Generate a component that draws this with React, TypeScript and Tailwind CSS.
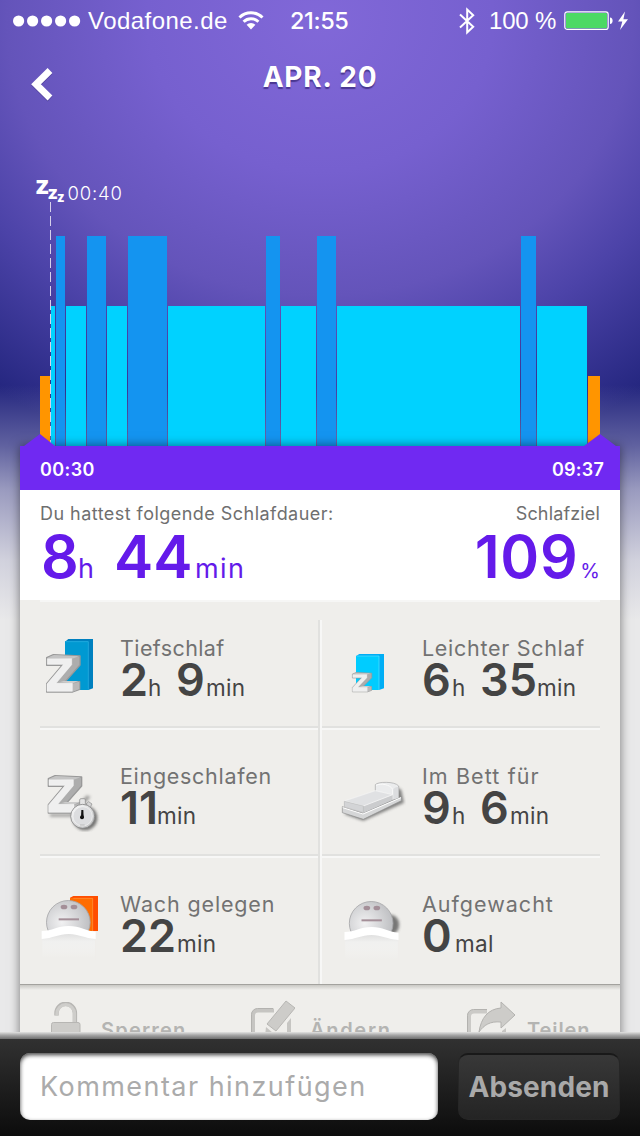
import type { ReactNode } from 'react';

const INTER = "font-['Inter','Noto_Sans',sans-serif]";

/* Sleep phases, left to right */
const PHASES = [
  { kind: 'awake', width: 10 },
  { kind: 'light', width: 4 },
  { kind: 'deep', width: 9 },
  { kind: 'light', width: 20 },
  { kind: 'deep', width: 19 },
  { kind: 'light', width: 20 },
  { kind: 'deep', width: 39 },
  { kind: 'light', width: 97 },
  { kind: 'deep', width: 14 },
  { kind: 'light', width: 35 },
  { kind: 'deep', width: 19 },
  { kind: 'light', width: 183 },
  { kind: 'deep', width: 15 },
  { kind: 'light', width: 50 },
  { kind: 'awake', width: 12 },
];

const PHASE_STYLES: Record<string, string> = {
  awake: 'h-[70px] bg-[#ff9500]',
  light: 'h-[140px] bg-[#00d2ff]',
  deep: 'h-[210px] bg-[#1494f0]',
};

const StatusBar = () => (
  <div className="flex h-[41px] shrink-0 items-center text-white">
    <svg className="ml-[13px]" width="68" height="12" viewBox="0 0 68 12" fill="#fff">
      {[0, 1, 2, 3, 4].map((i) => (
        <circle key={i} cx={5.6 + i * 14} cy="6" r="5.6" />
      ))}
    </svg>
    <span className="ml-[7px] w-[143px] whitespace-nowrap font-['Liberation_Sans',sans-serif] text-[24px] tracking-[0.45px]">
      Vodafone.de
    </span>
    <svg className="ml-[7px]" width="26" height="20" viewBox="0 0 26 20" fill="none" stroke="#fff">
      <path d="M1.5 6.5a16.5 16.5 0 0 1 23 0" strokeWidth="3" />
      <path d="M5.6 10.7a10.6 10.6 0 0 1 14.8 0" strokeWidth="3" />
      <path d="M8.6 13.8a6.2 6.2 0 0 1 8.8 0L13 18.5z" fill="#fff" stroke="none" />
    </svg>
    <span className="ml-[26px] w-[62px] whitespace-nowrap text-[23.5px] font-medium tracking-[-0.4px]">21:55</span>
    <svg className="ml-[107px]" width="16" height="28" viewBox="0 0 16 28" fill="none" stroke="#fff" strokeWidth="2">
      <path d="M1 7.5l13.2 12.2L8.2 25.5v-23l6 5.8L1 20.5" />
    </svg>
    <span className="ml-[14px] w-[75px] whitespace-nowrap font-['Liberation_Sans',sans-serif] text-[24px] tracking-[-0.2px]">
      100 %
    </span>
    <svg width="66" height="20" viewBox="0 0 66 20">
      <rect x="0.8" y="0.8" width="43.4" height="17.6" rx="2.5" fill="none" stroke="#fff" strokeWidth="1.2" />
      <rect x="2" y="2" width="41" height="15.2" rx="1" fill="#4cd964" />
      <path d="M46 6.5c3.5 0 3.5 6.5 0 6.5z" fill="#fff" />
      <path d="M61 .5L54 10.5h4.3L56 19l8-10.8h-4.6z" fill="#fff" />
    </svg>
  </div>
);

const Header = () => (
  <header className="relative flex h-[71px] shrink-0 justify-center">
    <button className="absolute left-[31px] top-[27px]" aria-label="Zurück">
      <svg width="24" height="36" viewBox="0 0 24 36" fill="none">
        <path d="M19 3.5L5 17.3 19 31" stroke="#30246b" strokeOpacity=".4" strokeWidth="6.8" />
        <path d="M19 2.5L5 16.3 19 30" stroke="#fff" strokeWidth="6.8" />
      </svg>
    </button>
    <h1 className="mt-[18px] whitespace-nowrap text-[28px] font-bold leading-[36px] tracking-[0.8px] text-white [text-shadow:0_2px_1px_rgba(40,25,100,.6)]">
      APR. 20
    </h1>
  </header>
);

const Chart = () => (
  <div className="relative h-[334px] shrink-0 px-10">
    {/* Falling asleep marker */}
    <div className="absolute left-[35px] top-[61px] flex items-start font-extrabold leading-none text-white">
      <span className="text-[25px]">z</span>
      <span className="-ml-0.5 mt-[11px] text-[18px]">z</span>
      <span className="-ml-px mt-[18px] text-[13px]">z</span>
      <span className="ml-[3px] mt-[11px] text-[18.5px] font-light tracking-[0.8px]">00:40</span>
    </div>
    <svg className="absolute left-[50px] top-[90px]" width="1" height="241" viewBox="0 0 1 241">
      <path d="M.5 0v241" stroke="#d5d0ea" strokeDasharray="10 4" />
    </svg>
    <div className="flex h-full items-end gap-px">
      {PHASES.map((phase, i) => (
        <div key={i} className={PHASE_STYLES[phase.kind]} style={{ width: phase.width }} />
      ))}
    </div>
  </div>
);

const TimeRange = () => (
  <div className="relative flex h-11 items-center justify-between bg-[#7029f2] pl-5 pr-4 pt-0.5 text-[18px] font-semibold tracking-[0.4px] text-white">
    <svg className="absolute -top-3 left-0" width="600" height="12" viewBox="0 0 600 12" fill="#7029f2">
      <path d="M4 12L20 0l15 12zM564 12L580 0l16 12z" />
    </svg>
    <span>00:30</span>
    <span className="tracking-[0.2px]">09:37</span>
  </div>
);

const Summary = () => (
  <div className="flex h-[110px] justify-between bg-white px-5 pt-[10px] text-[#6f6f6f]">
    <div>
      <p className="whitespace-nowrap text-[18px] leading-[28px] tracking-[0.46px]">Du hattest folgende Schlafdauer:</p>
      <p className="flex items-baseline whitespace-nowrap pl-px text-[#641aea]">
        <span className="w-[37px] text-[59px] font-semibold leading-[58px]">8</span>
        <span className="w-[36px] text-[27px] leading-none">h</span>
        <span className="w-[81px] text-[59px] font-semibold leading-[58px]">44</span>
        <span className="text-[27px] leading-none tracking-[1.4px]">min</span>
      </p>
    </div>
    <div className="flex flex-col items-end">
      <p className="text-[18px] leading-[28px] tracking-[0.15px]">Schlafziel</p>
      <p className="flex items-baseline text-[#641aea]">
        <span className="text-[59px] font-semibold leading-[58px] tracking-[0.7px]">109</span>
        <span className="ml-0.5 text-[20px] leading-none">%</span>
      </p>
    </div>
  </div>
);

/* Extruded letter in front of the phase boxes */
const BlockZ = ({ transform }: { transform?: string }) => (
  <g transform={transform} strokeLinejoin="round">
    <path d="M140 533l20-9 80 4v27l-44 50h43v23l-21 8h-78v-25l46-55h-46z" fill="#adadad" stroke="#999" strokeWidth="4" />
    <path d="M142 533l20-8 75 4-21 7z" fill="#c4c4c4" />
    <path d="M218 612l20-7v22l-20 8z" fill="#b9b9b9" />
    <path d="M178 607l12-4h46l-18 7z" fill="#cbcbcb" />
    <path d="M142 536h73v18l-47 56h49v24h-76v-22l50-59h-49z" fill="#efefef" stroke="#fbfbfb" strokeWidth="1.5" />
  </g>
);

const DeepSleepIcon = () => (
  <svg width="60" height="74" viewBox="120 450 180 222">
    <path d="M195 485l10-8h74v148l-14 5h-70z" fill="#0080bf" />
    <path d="M195 484h70v146h-70z" fill="#0099d2" />
    <path d="M197 485h68v144" fill="none" stroke="#2fb3e6" strokeWidth="2" />
    <BlockZ />
  </svg>
);

const LightSleepIcon = () => (
  <svg width="60" height="74" viewBox="60 450 180 222">
    <path d="M108 528l10-6h74v103l-15 5h-69z" fill="#00aef5" />
    <path d="M108 528h69v102h-69z" fill="#00ccff" />
    <path d="M110 528h67v102" fill="none" stroke="#5ce0ff" strokeWidth="2" />
    <BlockZ transform="translate(16 306) scale(.58 .518)" />
  </svg>
);

const FellAsleepIcon = () => (
  <svg width="60" height="74" viewBox="60 114 180 222">
    <defs>
      <filter id="watchShadow" x="-50%" y="-50%" width="200%" height="200%">
        <feGaussianBlur stdDeviation="5" />
      </filter>
      <linearGradient id="watch" x1="0" y1="0" x2="1" y2="1">
        <stop offset="0" stopColor="#fff" />
        <stop offset="1" stopColor="#b9babb" />
      </linearGradient>
    </defs>
    <path d="M90 281h60l50-55 12 4-50 60H90z" fill="#555" opacity=".5" filter="url(#watchShadow)" />
    <BlockZ transform="translate(-55 -357)" />
    <circle cx="195" cy="294" r="37" fill="#333" opacity=".65" filter="url(#watchShadow)" />
    <rect x="179" y="236" width="17" height="20" rx="4" fill="#e4e4e4" stroke="#888" strokeWidth="2" />
    <path d="M198 252l8-7 10 7-6 11z" fill="#d4d4d4" stroke="#888" strokeWidth="2" />
    <circle cx="188" cy="289" r="36" fill="url(#watch)" stroke="#858585" strokeWidth="2.5" />
    <circle cx="188" cy="289" r="29" fill="#dcdddf" stroke="#f4f4f4" strokeWidth="2" />
    <path d="M184 270h6l1 22h-8z" fill="#111" />
    <circle cx="186" cy="292" r="6" fill="#111" />
    <path d="M180 315h14" stroke="#bbb" strokeWidth="3" />
  </svg>
);

const BedIcon = () => (
  <svg width="66" height="74" viewBox="60 114 198 222">
    <defs>
      <filter id="bedShadow" x="-30%" y="-30%" width="160%" height="160%">
        <feGaussianBlur stdDeviation="5" />
      </filter>
    </defs>
    <path d="M72 282l58 20 122-54-8-38-14-8z" fill="#555" opacity=".7" filter="url(#bedShadow)" />
    <path d="M67 260l60 20 117-50v12l-114 56-63-20z" fill="#d5d6d7" stroke="#8e8e8e" strokeWidth="2" />
    <path d="M166 226v-32c6-9 58-11 70 4v36l-18 6z" fill="#ebeced" stroke="#a5a5a5" strokeWidth="2" />
    <path d="M168 196c14-7 42-3 50 12v30" fill="none" stroke="#fafafa" strokeWidth="3" />
    <path d="M220 208c3-6 12-9 15-6v31l-15 5z" fill="#dcdddf" />
    <path d="M73 243l93-31 52 12v16l-88 39-57-18z" fill="#cbccce" />
    <path d="M73 243l93-31 52 12-88 34z" fill="#e0e1e3" stroke="#f5f5f5" strokeWidth="2.5" />
    <path d="M73 244v17l57 17v-20z" fill="#d3d4d6" stroke="#b5b5b5" strokeWidth="1.5" />
    <path d="M68 263l61 19 114-49" fill="none" stroke="#fff" strokeWidth="3" />
  </svg>
);

const Sleeper = ({ id, shadow }: { id: string; shadow?: boolean }) => (
  <g>
    <defs>
      <radialGradient id={`${id}Face`} cx=".35" cy=".5" r=".68">
        <stop offset="0" stopColor="#f1f1f2" />
        <stop offset="1" stopColor="#bcbdc0" />
      </radialGradient>
      <linearGradient id={`${id}Sheet`} x1="0" y1="0" x2="0" y2="1">
        <stop offset="0" stopColor="#dcdcdc" />
        <stop offset=".35" stopColor="#f0f0ef" />
        <stop offset="1" stopColor="#f5f5f4" stopOpacity="0" />
      </linearGradient>
      <filter id={`${id}Blur`} x="-50%" y="-50%" width="200%" height="200%">
        <feGaussianBlur stdDeviation="4" />
      </filter>
    </defs>
    {shadow && <ellipse cx="202" cy="611" rx="27" ry="30" fill="#444" opacity=".7" filter={`url(#${id}Blur)`} />}
    <circle cx="145" cy="607" r="65.5" fill={`url(#${id}Face)`} stroke="#a6a6a8" strokeWidth="2.5" />
    <ellipse cx="132" cy="561" rx="10" ry="7" fill="#a48f98" />
    <ellipse cx="162" cy="561" rx="10" ry="7" fill="#a48f98" />
    <path d="M116 598h61" stroke="#a48f98" strokeWidth="6" />
    <path d="M66 650q80-28 160 0v70H66z" fill="#efeeeb" />
    <path d="M67 650q79-28 158 0v64H67z" fill={`url(#${id}Sheet)`} />
    <path d="M65 633c32 0 46-15 81-15s49 15 81 17v22c-34-2-50-15-81-15s-47 13-81 15z" fill="#fff" />
  </g>
);

const AwakeIcon = () => (
  <svg width="60" height="74" viewBox="60 498 180 222">
    <path d="M150 533l10-5h74v105h-84z" fill="#ff4e00" />
    <path d="M150 534h69v99h-69z" fill="#ff6c00" />
    <path d="M160 535h58v98" fill="none" stroke="#ff9440" strokeWidth="2" />
    <Sleeper id="awake" />
  </svg>
);

const WokeUpIcon = () => (
  <svg width="66" height="74" viewBox="60 498 198 222">
    <g transform="translate(8.5 3)">
      <Sleeper id="woke" shadow />
    </g>
  </svg>
);

type StatProps = {
  icon: ReactNode;
  label: string;
  labelClass: string;
  children: ReactNode;
};

const Stat = ({ icon, label, labelClass, children }: StatProps) => (
  <div className="flex h-32 border-b-2 border-[#f7f7f6] last:h-[126px] last:border-0">
    <div className="flex w-full items-start border-b-2 border-[#e1e1df] pt-7 [div:last-child>&]:border-0">
      {icon}
      <div className="flex-1 pt-[5px]">
        <p className={`whitespace-nowrap text-[21.5px] leading-[27px] text-[#727272] ${labelClass}`}>{label}</p>
        <p className="flex items-baseline whitespace-nowrap text-[#444]">{children}</p>
      </div>
    </div>
  </div>
);

const Num = ({ className, children }: { className: string; children: ReactNode }) => (
  <span className={`text-[45px] font-semibold leading-[36px] ${className}`}>{children}</span>
);

const Unit = ({ className = '', children }: { className?: string; children: ReactNode }) => (
  <span className={`text-[22.5px] leading-none tracking-[0.3px] ${className}`}>{children}</span>
);

const Stats = () => (
  <div className="flex px-5">
    <div className="w-[278px]">
      <Stat icon={<div className="w-20 shrink-0"><DeepSleepIcon /></div>} label="Tiefschlaf" labelClass="tracking-[0.4px]">
        <Num className="w-[28px]">2</Num>
        <Unit className="w-[28px]">h</Unit>
        <Num className="w-[30px]">9</Num>
        <Unit>min</Unit>
      </Stat>
      <Stat icon={<div className="w-20 shrink-0"><FellAsleepIcon /></div>} label="Eingeschlafen" labelClass="tracking-[0.7px]">
        <Num className="w-[37px]">11</Num>
        <Unit>min</Unit>
      </Stat>
      <Stat icon={<div className="w-20 shrink-0"><AwakeIcon /></div>} label="Wach gelegen" labelClass="tracking-[0.85px]">
        <Num className="w-[57px]">22</Num>
        <Unit>min</Unit>
      </Stat>
    </div>
    <div className="mt-[18px] w-1 border-l-2 border-r-2 border-l-[#e1e1df] border-r-[#f7f7f6]" />
    <div className="w-[278px]">
      <Stat icon={<div className="w-[100px] shrink-0 pl-[18px]"><LightSleepIcon /></div>} label="Leichter Schlaf" labelClass="tracking-[0.7px]">
        <Num className="w-[30px]">6</Num>
        <Unit className="w-[28px]">h</Unit>
        <Num className="w-[57px]">35</Num>
        <Unit>min</Unit>
      </Stat>
      <Stat icon={<div className="w-[100px] shrink-0 pl-[18px]"><BedIcon /></div>} label="Im Bett für" labelClass="tracking-[1.1px]">
        <Num className="w-[30px]">9</Num>
        <Unit className="w-[28px]">h</Unit>
        <Num className="w-[30px]">6</Num>
        <Unit>min</Unit>
      </Stat>
      <Stat icon={<div className="w-[100px] shrink-0 pl-[18px]"><WokeUpIcon /></div>} label="Aufgewacht" labelClass="tracking-[1px]">
        <Num className="w-[33px]">0</Num>
        <Unit>mal</Unit>
      </Stat>
    </div>
  </div>
);

const LockIcon = () => (
  <svg width="30" height="40" viewBox="0 0 30 40">
    <path d="M5.5 13.5v-2.5a9.2 9.2 0 0 1 18.4 0v11" fill="none" stroke="#b7b6b3" strokeWidth="4.4" />
    <path d="M5.9 13.5v-2a8.8 8.8 0 0 1 17.6 0v11" fill="none" stroke="#cecdca" strokeWidth="3.2" />
    <rect x=".5" y="20.5" width="28.5" height="19" rx="2" fill="#cdccc9" stroke="#b7b6b3" />
  </svg>
);

const EditIcon = () => (
  <svg width="44" height="42" viewBox="0 0 44 42">
    <path d="M23 10.5H7a5 5 0 0 0-5 5V42" fill="none" stroke="#c6c5c2" strokeWidth="4" />
    <path d="M40 18v24h-4V23z" fill="#c6c5c2" />
    <path d="M22 8.5H6.5a6 6 0 0 0-6 6V42" fill="none" stroke="#b3b2af" />
    <path d="M35 1l9 7-19 23-9-7z" fill="#cdccc9" stroke="#b7b6b3" />
    <path d="M15 27l7 6-8 3z" fill="#c6c5c2" />
  </svg>
);

const ShareIcon = () => (
  <svg width="48" height="42" viewBox="0 0 48 42">
    <path d="M20 10.5H7a5 5 0 0 0-5 5V42" fill="none" stroke="#cbcac7" strokeWidth="4" />
    <path d="M20 8.5H6.5a6 6 0 0 0-6 6V42" fill="none" stroke="#b3b2af" />
    <path d="M34 1l14 13-14 13v-6c-11-1-17 3-22 10C14 17 21 8 34 7z" fill="#cdccc9" stroke="#b3b2af" />
    <path d="M39 27v15h-4V30z" fill="#c6c5c2" />
  </svg>
);

const Actions = () => (
  <div className="flex h-[72px] bg-[linear-gradient(#a3a29e_0,#a3a29e_1px,#c9c8c4_1px,#efeeeb_6px)] text-[20px] font-semibold text-[#b4b4b2]">
    <div className="flex w-[200px] items-start pl-[31px] pt-[18px]">
      <LockIcon />
      <span className="ml-5 mt-[18px] leading-5 tracking-[1.2px]">Sperren</span>
    </div>
    <div className="flex w-[200px] items-start pl-[31px] pt-[16px]">
      <EditIcon />
      <span className="ml-[15px] mt-[20px] leading-5 tracking-[1.7px]">Ändern</span>
    </div>
    <div className="flex w-[200px] items-start pl-[47px] pt-[17px]">
      <ShareIcon />
      <span className="ml-[12px] mt-[19px] leading-5 tracking-[0.9px]">Teilen</span>
    </div>
  </div>
);

const CommentBar = () => (
  <footer className="relative flex h-[104px] shrink-0 flex-col">
    <div className="h-[7px] shrink-0 bg-[linear-gradient(#e2e2e1,#a6a6a6_45%,#6e6e6e)]" />
    <div className="flex flex-1 gap-5 bg-[linear-gradient(#313131,#0c0c0c)] px-5 pb-4 pt-[14px]">
      <div className="flex w-[418px] items-center rounded-[10px] bg-white pl-5 pt-px text-[27px] tracking-[1.45px] text-[#ababab] shadow-[inset_0_2px_4px_rgba(0,0,0,.75)]">
        <span className="whitespace-nowrap">Kommentar hinzufügen</span>
      </div>
      <button className="flex w-[162px] items-center justify-center rounded-[10px] border border-t-2 border-[#262626] border-t-[#191919] bg-[linear-gradient(#383838,#242424)] text-[28px] font-bold tracking-[0.1px] text-[#a9a9a9]">
        Absenden
      </button>
    </div>
  </footer>
);

export default function App() {
  return (
    <div
      className={`${INTER} flex h-[1136px] w-[640px] flex-col overflow-hidden bg-[linear-gradient(rgba(233,233,234,0)_385px,rgba(233,233,234,.3)_445px,rgba(233,233,234,.6)_490px,rgba(233,233,234,.88)_560px,#e9e9ea_620px),radial-gradient(540px_475px_at_320px_20px,#8168d8_0,#7660cf_32%,#6454ba_58%,#4c43a8_73%,#24267f_98%)]`}
    >
      <StatusBar />
      <Header />
      <main className="flex min-h-0 flex-1 flex-col overflow-hidden">
        <Chart />
        <section className="relative mx-5 shrink-0 bg-[#efeeeb] shadow-[0_0_10px_rgba(0,0,0,.5)]">
          <TimeRange />
          <Summary />
          <div className="mx-5 h-0.5 bg-[#f6f6f5]" />
          <Stats />
          <Actions />
        </section>
      </main>
      <CommentBar />
    </div>
  );
}
